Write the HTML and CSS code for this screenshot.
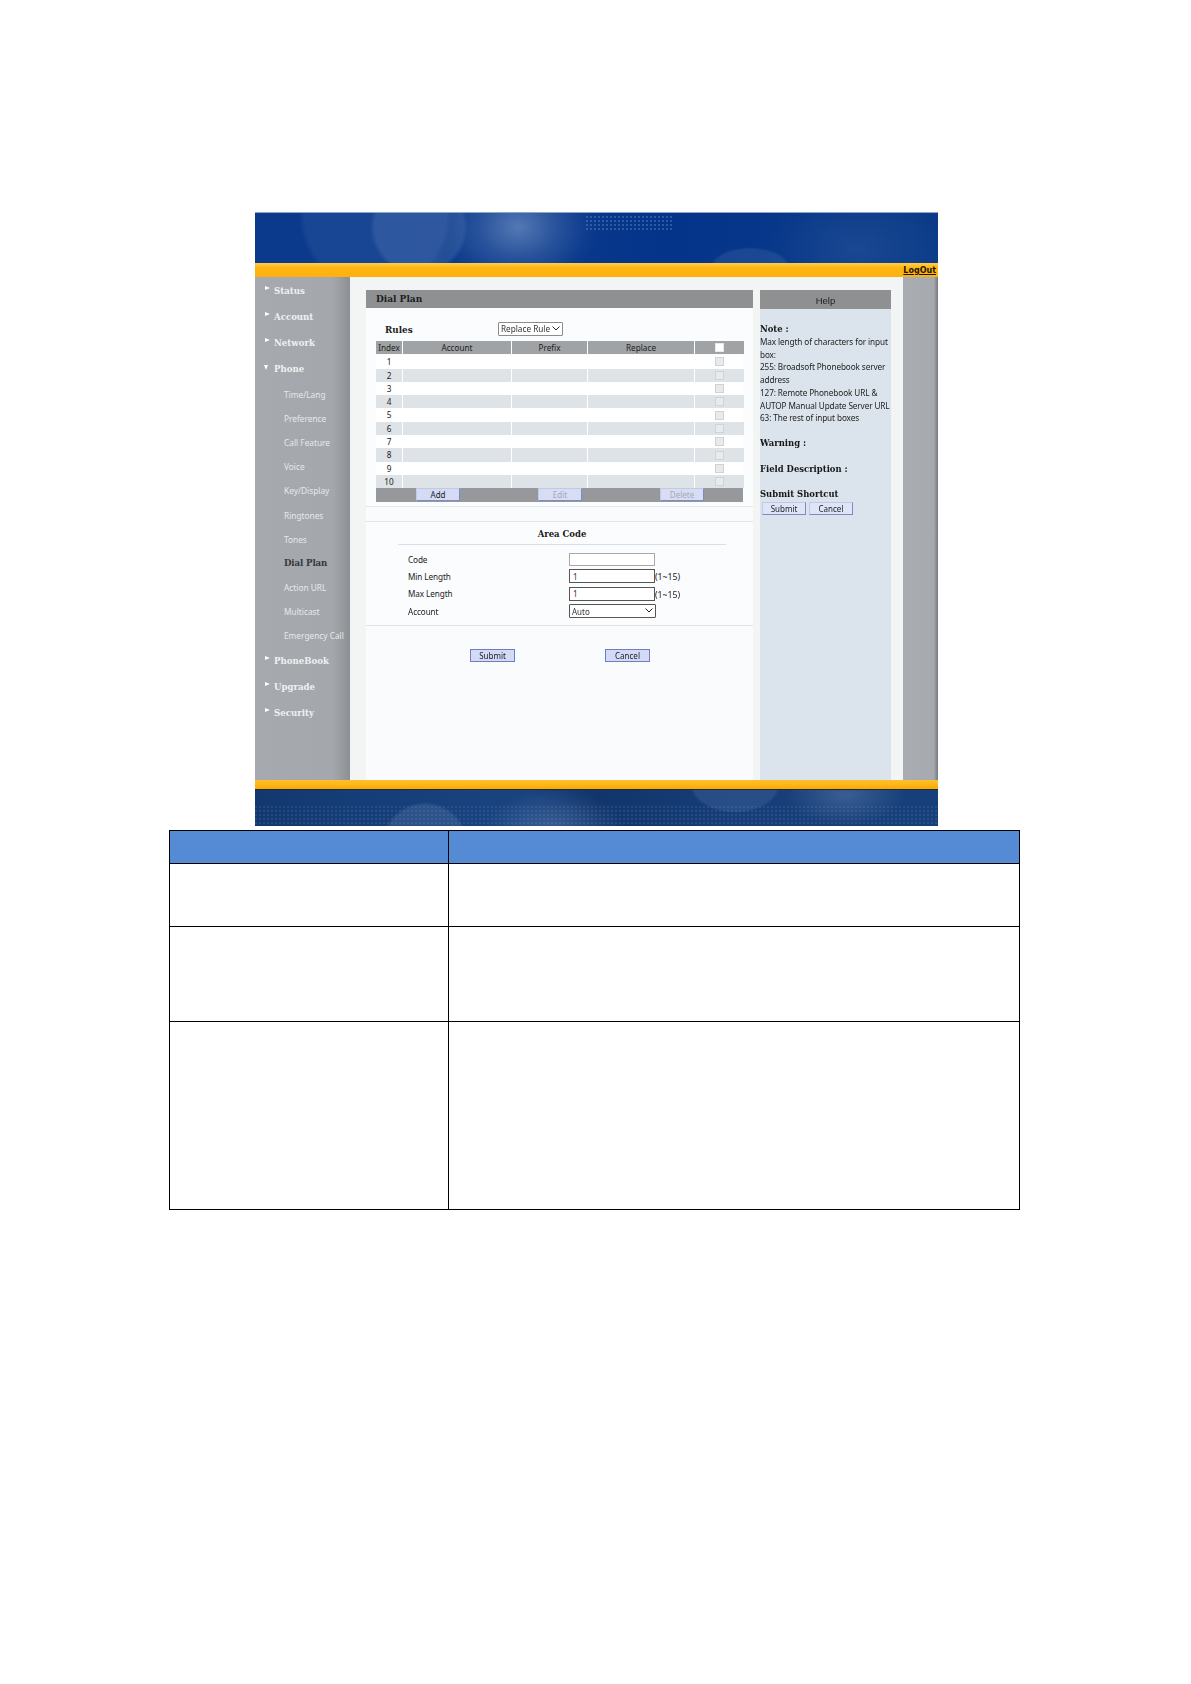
FILE: index.html
```html
<!DOCTYPE html>
<html lang="en">
<head>
<meta charset="utf-8">
<title>Dial Plan</title>
<link rel="stylesheet" href="styles.css">
</head>
<body>
<main class="page">
  <section class="shot">
    <header class="banner"></header>
    <div class="topbar"><a class="logout">LogOut</a></div>
    <div class="body">
      <nav class="side">
        <div class="nav-top"><span class="tri"></span>Status</div>
        <div class="nav-top"><span class="tri"></span>Account</div>
        <div class="nav-top"><span class="tri"></span>Network</div>
        <div class="nav-top"><span class="tri down"></span>Phone</div>
        <div class="nav-sub">Time/Lang</div>
        <div class="nav-sub">Preference</div>
        <div class="nav-sub">Call Feature</div>
        <div class="nav-sub">Voice</div>
        <div class="nav-sub">Key/Display</div>
        <div class="nav-sub">Ringtones</div>
        <div class="nav-sub">Tones</div>
        <div class="nav-sub active">Dial Plan</div>
        <div class="nav-sub">Action URL</div>
        <div class="nav-sub">Multicast</div>
        <div class="nav-sub">Emergency Call</div>
        <div class="nav-top"><span class="tri"></span>PhoneBook</div>
        <div class="nav-top"><span class="tri"></span>Upgrade</div>
        <div class="nav-top"><span class="tri"></span>Security</div>
      </nav>
      <div class="main">
        <div class="content">
          <h1 class="title">Dial Plan</h1>
          <section class="rules">
            <div class="rules-head">
              <span class="rules-label">Rules</span>
              <span class="sel-wrap">
                <select class="rule-select"><option>Replace Rule</option></select>
                <svg class="chev" viewBox="0 0 8 5" width="8" height="5"><path d="M.5 .5 4 4 7.5 .5" fill="none" stroke="#222" stroke-width="1"/></svg>
              </span>
            </div>
            <div class="grid">
              <div class="row head"><span>Index</span><span>Account</span><span>Prefix</span><span>Replace</span><span><i class="cb on"></i></span></div>
              <div class="row"><span>1</span><span></span><span></span><span></span><span><i class="cb"></i></span></div>
              <div class="row alt"><span>2</span><span></span><span></span><span></span><span><i class="cb"></i></span></div>
              <div class="row"><span>3</span><span></span><span></span><span></span><span><i class="cb"></i></span></div>
              <div class="row alt"><span>4</span><span></span><span></span><span></span><span><i class="cb"></i></span></div>
              <div class="row"><span>5</span><span></span><span></span><span></span><span><i class="cb"></i></span></div>
              <div class="row alt"><span>6</span><span></span><span></span><span></span><span><i class="cb"></i></span></div>
              <div class="row"><span>7</span><span></span><span></span><span></span><span><i class="cb"></i></span></div>
              <div class="row alt"><span>8</span><span></span><span></span><span></span><span><i class="cb"></i></span></div>
              <div class="row"><span>9</span><span></span><span></span><span></span><span><i class="cb"></i></span></div>
              <div class="row alt"><span>10</span><span></span><span></span><span></span><span><i class="cb"></i></span></div>
              <div class="grid-foot">
                <button class="btn">Add</button>
                <button class="btn off">Edit</button>
                <button class="btn off">Delete</button>
              </div>
            </div>
          </section>
          <section class="area">
            <h2 class="area-title">Area Code</h2>
            <div class="form">
              <label>Code</label><input class="field" value=""><span></span>
              <label>Min Length</label><input class="field dark" value="1"><span class="hint">(1~15)</span>
              <label>Max Length</label><input class="field dark" value="1"><span class="hint">(1~15)</span>
              <label>Account</label>
              <span class="sel-wrap">
                <select class="field dark sel"><option>Auto</option></select>
                <svg class="chev" viewBox="0 0 8 5" width="8" height="5"><path d="M.5 .5 4 4 7.5 .5" fill="none" stroke="#222" stroke-width="1"/></svg>
              </span>
              <span></span>
            </div>
          </section>
          <div class="actions">
            <button class="btn big">Submit</button>
            <button class="btn big">Cancel</button>
          </div>
        </div>
        <aside class="help">
          <h2 class="help-title">Help</h2>
          <div class="help-body">
            <h3 class="h-note">Note :</h3>
            <p>Max length of characters for input<br>box:<br>255: Broadsoft Phonebook server<br>address<br>127: Remote Phonebook URL &amp;<br>AUTOP Manual Update Server URL<br>63: The rest of input boxes</p>
            <h3>Warning :</h3>
            <h3 class="h-field">Field Description :</h3>
            <h3 class="h-short">Submit Shortcut</h3>
            <div class="help-btns">
              <button class="btn short">Submit</button>
              <button class="btn short">Cancel</button>
            </div>
          </div>
        </aside>
      </div>
      <div class="strip"></div>
    </div>
    <div class="botbar"></div>
    <footer class="banner-low"></footer>
  </section>
  <table class="doc">
    <tr class="doc-head"><th></th><th></th></tr>
    <tr class="r1"><td></td><td></td></tr>
    <tr class="r2"><td></td><td></td></tr>
    <tr class="r3"><td></td><td></td></tr>
  </table>
</main>
</body>
</html>
```
FILE: styles.css
```css
* { box-sizing: border-box; }
html, body { margin: 0; padding: 0; background: #fff; }
.page { min-height: 1684px; padding-top: 212px; }

.shot {
  width: 683px;
  margin-left: 255px;
  font-family: "Noto Sans", sans-serif;
  color: #222;
  filter: blur(0.4px);
}
.banner {
  position: relative;
  height: 51px;
  background:
    radial-gradient(ellipse 80px 62px at 263px 14px, rgba(135,165,210,.58), rgba(85,120,180,.38) 50%, rgba(60,100,165,.12) 85%, transparent 100%),
    radial-gradient(circle 49px at 164px 14px, rgba(130,160,205,.2) 90%, transparent 100%),
    radial-gradient(circle 76px at 120px 4px, rgba(90,125,185,.17) 92%, transparent 100%),
    radial-gradient(ellipse 40px 20px at 495px 54px, rgba(110,140,190,.2) 88%, transparent 100%),
    radial-gradient(ellipse 90px 60px at 600px 36px, rgba(90,125,175,.22), transparent 100%),
    linear-gradient(90deg, #0b3a8c, #0c3a8b 40%, #03348a 60%, #0b3b88 100%);
  border-top: 1px solid #8fa6cc;
}
.banner::before {
  content: "";
  position: absolute;
  left: 331px;
  top: 3px;
  width: 86px;
  height: 16px;
  opacity: .5;
  background: radial-gradient(circle at 1px 1px, rgba(170,195,235,.5) .7px, transparent 1px) 0 0 / 4px 4px;
}
.topbar {
  height: 14px;
  padding-right: 2px;
  text-align: right;
  background: linear-gradient(#ffcf4d, #ffb511 35%, #fdb10f);
}
.logout {
  display: block;
  font: bold 8px/15px "DejaVu Sans", sans-serif;
  color: #1c1608;
  text-decoration: underline;
}
.body { display: flex; height: 503px; }

.side {
  width: 95px;
  padding-top: 1px;
  background: linear-gradient(90deg, #a6a9ae 0, #a4a7ac 82%, #8c8f94 100%);
}
.nav-top {
  height: 26px;
  display: flex;
  align-items: center;
  padding-left: 19px;
  position: relative;
  font: bold 8.6px "DejaVu Serif", serif;
  color: #eff1f3;
}
.tri {
  position: absolute;
  left: 10px;
  top: 8px;
  border-left: 5px solid #fff;
  border-top: 2.5px solid transparent;
  border-bottom: 2.5px solid transparent;
}
.tri.down {
  left: 9px;
  top: 9px;
  border-top: 5px solid #fff;
  border-left: 2.5px solid transparent;
  border-right: 2.5px solid transparent;
  border-bottom: 0;
}
.nav-sub {
  height: 24.2px;
  display: flex;
  align-items: center;
  padding-left: 29px;
  font-size: 8.3px;
  color: #e7e9eb;
}
.nav-sub.active { font-weight: bold; font-family: "DejaVu Serif", serif; font-size: 8.6px; letter-spacing: -.1px; color: #34373b; }

.main {
  flex: 1;
  display: flex;
  gap: 7px;
  padding: 13px 12px 0 16px;
  background: #f3f4f4;
}
.content {
  width: 387px;
  background: #f9fbfc;
  display: flex;
  flex-direction: column;
}
.title {
  margin: 0;
  height: 18px;
  padding-left: 10px;
  font: bold 9px/18px "DejaVu Serif", serif;
  color: #1d1d1d;
  background: #8f9091;
}
.rules {
  height: 199px;
  padding: 11px 10px 0;
  background: #fbfcfd;
  border-bottom: 1px solid #e3e6e8;
}
.rules-head { display: flex; align-items: center; height: 19px; margin-bottom: 3px; padding-left: 9px; }
.rules-label { width: 113px; padding-top: 2px; font: bold 8.8px "DejaVu Serif", serif; color: #1b1b1b; }
.sel-wrap { position: relative; display: block; line-height: 0; }
.chev { position: absolute; right: 3px; top: 4px; pointer-events: none; }
.rule-select {
  appearance: none;
  display: block;
  width: 65px;
  height: 14px;
  padding: 0 0 0 2px;
  font: 8.2px "Noto Sans", sans-serif;
  background: #fff;
  border: 1px solid #8c8c8c;
  border-radius: 1px;
  color: #333;
}
.grid { width: 367px; }
.row {
  display: grid;
  grid-template-columns: 26px 108px 75px 106px 49px;
  column-gap: 1px;
  height: 13.3px;
  font-size: 8.2px;
  line-height: 13.3px;
  text-align: center;
  color: #222;
  background: #fff;
}
.row span { min-width: 0; display: flex; align-items: center; justify-content: center; }
.row.head { margin-bottom: 1px; }
.row.head span { background: #a0a3a6; }
.row.alt span { background: #dde3e7; }
.cb {
  width: 9px;
  height: 9px;
  background: #e8eaec;
  border: 1px solid #cfd3d6;
}
.cb.on { background: #fff; border-color: #e9e9e9; }
.grid-foot {
  height: 14px;
  display: flex;
  padding-left: 40px;
  gap: 78px;
  background: #96989b;
}
.btn {
  width: 44px;
  height: 13px;
  padding: 0;
  font: 8px "Noto Sans", sans-serif;
  color: #222;
  background: #d5dbf5;
  border: 1px solid #7d8cc0;
  border-top-color: #c2c9e6;
  border-left-color: #c2c9e6;
}
.btn.off { color: #a3a8b8; background: #d8ddf3; }
.area {
  height: 105px;
  margin-top: 14px;
  background: #fbfcfd;
  border-top: 1px solid #e3e6e8;
  border-bottom: 1px solid #e1e4e6;
}
.area-title {
  margin: 0 27px 0 32px;
  height: 23px;
  text-align: center;
  font: bold 8.5px/25px "DejaVu Serif", serif;
  color: #1b1b1b;
  border-bottom: 1px solid #d9deea;
}
.form {
  display: grid;
  grid-template-columns: 161px 87px auto;
  grid-auto-rows: 17.3px;
  align-items: center;
  padding: 5.5px 0 0 42px;
  font-size: 8.2px;
  letter-spacing: -.1px;
}
.field {
  display: block;
  width: 86px;
  height: 13px;
  padding: 0 3px;
  font: 8px "Noto Sans", sans-serif;
  background: #fff;
  color: #333;
  border: 1px solid #a9a9a9;
  outline: 0;
}
.field.dark { border-color: #555; height: 14px; }
.sel { appearance: none; width: 87px; padding: 0 0 0 2px; border-radius: 1px; }
.hint { font-size: 8.7px; padding-top: 2px; margin-left: -1px; letter-spacing: 0; }
.actions {
  display: flex;
  gap: 90px;
  padding: 23px 0 0 104px;
}
.btn.big { width: 45px; height: 13px; background: #d3d9f6; border-color: #6f7fbd; }

.help { width: 131px; display: flex; flex-direction: column; }
.help-title {
  margin: 0;
  height: 19px;
  text-align: center;
  font: normal 9.5px/21px "Liberation Sans", sans-serif;
  color: #222;
  background: #8f9091;
}
.help-body {
  flex: 1;
  background: #dbe4ec;
  font-size: 8.2px;
  letter-spacing: -.1px;
  line-height: 12.7px;
  color: #222;
  white-space: nowrap;
}
.help-body h3 {
  margin: 0;
  height: 26px;
  font: bold 8.45px/14px "DejaVu Serif", serif;
  letter-spacing: 0;
  color: #161616;
}
.help-body .h-note { height: 14px; margin-top: 13px; }
.help-body .h-field { height: 25px; }
.help-body .h-short { height: 14px; margin-top: 0; }
.help-body p { margin: 0 0 11px; }
.help-btns { display: flex; gap: 3px; padding-left: 2px; margin-top: 1px; }
.btn.short { width: 44px; height: 13px; background: #dfe5f8; }
.strip {
  width: 35px;
  background: linear-gradient(90deg, #a9acb1, #a6a9ae 88%, #77797d 100%);
}
.botbar { height: 9px; background: linear-gradient(#ffc02e, #fdb10f 70%, #f1a90f); }
.banner-low {
  position: relative;
  height: 37px;
  background:
    radial-gradient(ellipse 70px 40px at 300px 40px, rgba(120,150,195,.36), transparent 100%),
    radial-gradient(circle 44px at 170px 56px, rgba(100,130,175,.28) 92%, transparent 100%),
    radial-gradient(ellipse 60px 30px at 590px 5px, rgba(110,140,185,.4), transparent 100%),
    radial-gradient(ellipse 45px 28px at 480px -5px, rgba(80,115,170,.3) 92%, transparent 100%),
    linear-gradient(90deg, #12386f, #163f7a 20%, #1a4480 40%, #11356c 50%, #173e78 70%, #17407a 100%);
  border-top: 1px solid #2b2a22;
}
.banner-low::before {
  content: "";
  position: absolute;
  left: 0;
  right: 0;
  bottom: 2px;
  height: 18px;
  background: radial-gradient(circle at 1px 1px, rgba(175,195,225,.16) .6px, transparent 1px) 0 0 / 4px 4px;
}

.doc {
  width: 851px;
  margin: 4px 0 0 169px;
  border-collapse: collapse;
  table-layout: fixed;
}
.doc th, .doc td { padding: 0; border: 1px solid #000; }
.doc th:first-child, .doc td:first-child { width: 279px; }
.doc-head th { background: #558ad4; }
.doc-head { height: 33px; }
.r1 { height: 63px; }
.r2 { height: 95px; }
.r3 { height: 188px; }
```
